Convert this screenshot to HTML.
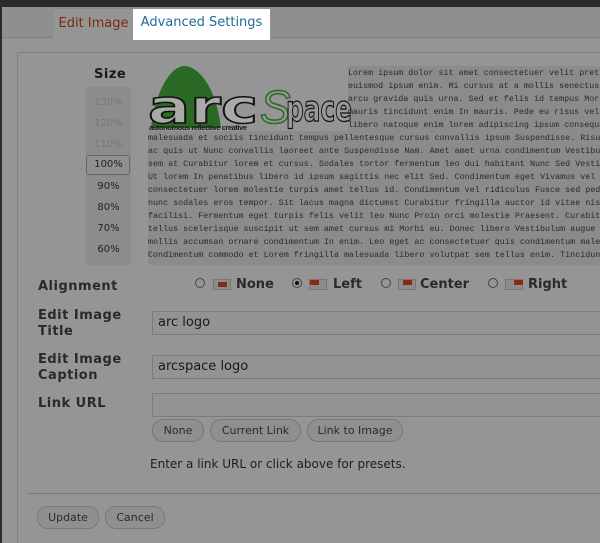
<!DOCTYPE html>
<html style="overflow:hidden"><head><meta charset="utf-8"><style>
html,body{margin:0;width:600px;height:543px;overflow:hidden}
body{background:#959595;position:relative;font-family:"DejaVu Sans","Liberation Sans",sans-serif;color:#222}
.a{position:absolute}
.mono{font-family:"Liberation Mono",monospace;font-size:8.4px;color:#2a2a2a;white-space:pre;line-height:13px}
.lbl{font-weight:bold;font-size:13px;color:#2a2a2a;letter-spacing:.5px;line-height:16px}
.inp{position:absolute;left:152px;width:460px;height:24px;border:1px solid #7c7c7c;background:#939393;font-size:13px;line-height:22px;padding-left:5px;color:#1a1a1a;box-sizing:border-box}
.btn{position:absolute;height:23px;border:1px solid #777;border-radius:11px;background:#8f8f8f;font-size:11px;line-height:21px;text-align:center;color:#2a2a2a;box-sizing:border-box}
.pct{position:absolute;left:86px;width:45px;text-align:center;font-size:10px;color:#222}
.rad{position:absolute;width:10px;height:10px;border:1px solid #444;border-radius:50%;box-sizing:border-box;top:278px}
.ico{position:absolute;top:279px;width:18px;height:11px;border:1px solid #777;box-sizing:border-box;background:#8c8c8c}
.ico i{position:absolute;background:#8a2a12;width:9px;height:5px;top:0}
.rl{position:absolute;top:277px;font-weight:bold;font-size:13px;color:#2a2a2a}
</style></head><body>
<div class="a" style="left:0;top:0;width:600px;height:7px;background:#2a2a2a"></div>
<div class="a" style="left:0;top:0;width:2px;height:543px;background:#2a2a2a"></div>
<div class="a" style="left:2px;top:7px;width:598px;height:30px;background:#8f8f8f;border-bottom:1px solid #808080"></div>
<div class="a" style="left:52px;top:8px;width:81px;height:30px;background:#959595;border:1px solid #888;border-bottom:none;border-radius:3px 3px 0 0;color:#7a2a10;font-size:13px;line-height:30px;text-align:center">Edit Image</div>
<div class="a" style="left:133px;top:9px;width:137px;height:31px;background:#fff;color:#1f6a99;font-size:13px;line-height:28px;text-align:center">Advanced Settings</div>
<div class="a" style="left:17px;top:52px;width:590px;height:491px;border-left:1px solid #7f7f7f;border-top:1px solid #7f7f7f;box-sizing:border-box"></div>
<div class="a" style="left:94px;top:67px;font-weight:bold;font-size:13px;color:#1a1a1a;letter-spacing:.5px">Size</div>
<div class="a" style="left:86px;top:87px;width:45px;height:178px;background:#8c8c8c"></div>
<div class="pct" style="top:97px;color:#777">130%</div>
<div class="pct" style="top:118px;color:#777">120%</div>
<div class="pct" style="top:139px;color:#777">110%</div>
<div class="a" style="left:86px;top:155px;width:44px;height:20px;border:1px solid #666;border-radius:3px;background:#909090;box-sizing:border-box"></div>
<div class="pct" style="top:159px">100%</div>
<div class="pct" style="top:181px">90%</div>
<div class="pct" style="top:202px">80%</div>
<div class="pct" style="top:223px">70%</div>
<div class="pct" style="top:244px">60%</div>
<div class="a" style="left:148px;top:66px;width:452px;height:199px;background:#8b8b8b"></div>
<div class="a" style="left:148px;top:66px;width:200px;height:65px;background:#959595"></div>
<svg class="a" style="left:148px;top:66px" width="205" height="66" viewBox="0 0 205 66">
<path d="M3 62 C8 20 25 0 36 0 C50 0 68 20 73 62 Z" fill="#2b6a24"/>
<text x="0" y="57" font-family="DejaVu Sans,sans-serif" font-weight="bold" font-size="46" fill="#aaa" stroke="#111" stroke-width="1.5" textLength="110" lengthAdjust="spacingAndGlyphs">arc</text>
<text x="112" y="57" font-family="Liberation Sans,sans-serif" font-style="italic" font-size="46" fill="none" stroke="#2b6a24" stroke-width="1.5">S</text>
<text x="138" y="55" font-family="DejaVu Sans,sans-serif" font-weight="bold" font-size="36" fill="#999" stroke="#111" stroke-width="1.3" textLength="66" lengthAdjust="spacingAndGlyphs">pace</text>
<text x="1" y="64" font-family="Liberation Sans,sans-serif" font-weight="bold" font-size="7.5" fill="#1a1a1a" textLength="98">autonomous reflective creative</text>
</svg>
<div class="a mono" style="left:348px;top:67px">Lorem ipsum dolor sit amet consectetuer velit pret
euismod ipsum enim. Mi cursus at a mollis senectus
arcu gravida quis urna. Sed et felis id tempus Morb
mauris tincidunt enim In mauris. Pede eu risus veli
libero natoque enim lorem adipiscing ipsum consequa</div>
<div class="a mono" style="left:148px;top:132px">malesuada et sociis tincidunt tempus pellentesque cursus convallis ipsum Suspendisse. Risu
ac quis ut Nunc convallis laoreet ante Suspendisse Nam. Amet amet urna condimentum Vestibul
sem at Curabitur lorem et cursus. Sodales tortor fermentum leo dui habitant Nunc Sed Vestil
Ut lorem In penatibus libero id ipsum sagittis nec elit Sed. Condimentum eget Vivamus vel 
consectetuer lorem molestie turpis amet tellus id. Condimentum vel ridiculus Fusce sed pede
nunc sodales eros tempor. Sit lacus magna dictumst Curabitur fringilla auctor id vitae nisi
facilisi. Fermentum eget turpis felis velit leo Nunc Proin orci molestie Praesent. Curabitu
tellus scelerisque suscipit ut sem amet cursus mi Morbi eu. Donec libero Vestibulum augue e
mollis accumsan ornare condimentum In enim. Leo eget ac consectetuer quis condimentum male.
Condimentum commodo et Lorem fringilla malesuada libero volutpat sem tellus enim. Tincidunt</div>
<div class="a lbl" style="left:38px;top:279px">Alignment</div>
<div class="rad" style="left:195px"></div><div class="ico" style="left:213px"><i style="left:4px;top:2px;height:5px"></i></div><div class="rl" style="left:236px">None</div>
<div class="rad" style="left:292px"><i style="position:absolute;left:2px;top:2px;width:4px;height:4px;background:#111;border-radius:50%"></i></div><div class="ico" style="left:309px"><i style="left:0"></i></div><div class="rl" style="left:333px">Left</div>
<div class="rad" style="left:381px"></div><div class="ico" style="left:398px"><i style="left:4px"></i></div><div class="rl" style="left:420px">Center</div>
<div class="rad" style="left:488px"></div><div class="ico" style="left:505px"><i style="left:8px"></i></div><div class="rl" style="left:528px">Right</div>
<div class="a lbl" style="left:38px;top:308px">Edit Image<br>Title</div>
<div class="inp" style="top:311px">arc logo</div>
<div class="a lbl" style="left:38px;top:352px">Edit Image<br>Caption</div>
<div class="inp" style="top:355px">arcspace logo</div>
<div class="a lbl" style="left:38px;top:396px">Link URL</div>
<div class="inp" style="top:393px"></div>
<div class="btn" style="left:152px;top:419px;width:52px">None</div>
<div class="btn" style="left:210px;top:419px;width:91px">Current Link</div>
<div class="btn" style="left:307px;top:419px;width:96px">Link to Image</div>
<div class="a" style="left:150px;top:457px;font-size:12px;color:#1e1e1e">Enter a link URL or click above for presets.</div>
<div class="a" style="left:27px;top:493px;width:580px;height:1px;background:#7a7a7a"></div>
<div class="btn" style="left:37px;top:506px;width:62px">Update</div>
<div class="btn" style="left:105px;top:506px;width:60px">Cancel</div>
</body></html>
